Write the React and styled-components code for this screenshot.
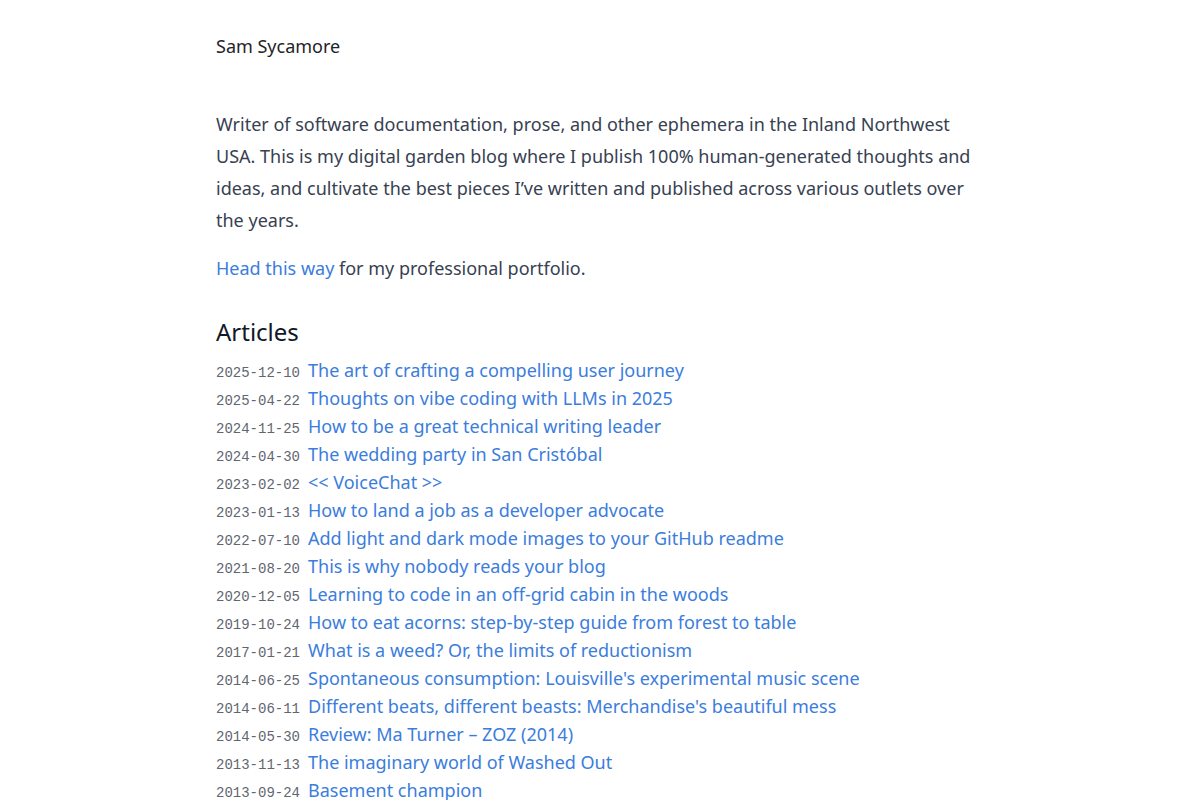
import React from "react";
import styled, { createGlobalStyle } from "styled-components";

const articles = [
  ["2025-12-10", "The art of crafting a compelling user journey"],
  ["2025-04-22", "Thoughts on vibe coding with LLMs in 2025"],
  ["2024-11-25", "How to be a great technical writing leader"],
  ["2024-04-30", "The wedding party in San Cristóbal"],
  ["2023-02-02", "<< VoiceChat >>"],
  ["2023-01-13", "How to land a job as a developer advocate"],
  ["2022-07-10", "Add light and dark mode images to your GitHub readme"],
  ["2021-08-20", "This is why nobody reads your blog"],
  ["2020-12-05", "Learning to code in an off-grid cabin in the woods"],
  ["2019-10-24", "How to eat acorns: step-by-step guide from forest to table"],
  ["2017-01-21", "What is a weed? Or, the limits of reductionism"],
  ["2014-06-25", "Spontaneous consumption: Louisville's experimental music scene"],
  ["2014-06-11", "Different beats, different beasts: Merchandise's beautiful mess"],
  ["2014-05-30", "Review: Ma Turner – ZOZ (2014)"],
  ["2013-11-13", "The imaginary world of Washed Out"],
  ["2013-09-24", "Basement champion"],
];

const App = () => {
  return (
    <>
      <GlobalStyle />
      <Page>
        <Header>
          <SiteName href="#">Sam Sycamore</SiteName>
        </Header>
        <Main>
          <Paragraph>
            Writer of software documentation, prose, and other ephemera in the
            Inland Northwest USA. This is my digital garden blog where I publish
            100% human-generated thoughts and ideas, and cultivate the best
            pieces I’ve written and published across various outlets over the
            years.
          </Paragraph>
          <Paragraph>
            <Link href="#">Head this way</Link> for my professional portfolio.
          </Paragraph>
          <SectionTitle>Articles</SectionTitle>
          <ArticleList>
            {articles.map(([date, title]) => (
              <ArticleRow key={date + title}>
                <DateStamp>{date}</DateStamp>
                <Link href="#">{title}</Link>
              </ArticleRow>
            ))}
          </ArticleList>
        </Main>
      </Page>
    </>
  );
};
export default App;

const GlobalStyle = createGlobalStyle`
  body {
    margin: 0;
    background: #ffffff;
    font-family: "Noto Sans", sans-serif;
    color: #374151;
  }
`;
const Page = styled.div`
  max-width: 768px;
  margin: 0 auto;
  padding-top: 32px;
`;
const Header = styled.header`
  height: 28px;
  display: flex;
  align-items: center;
`;
const SiteName = styled.a`
  font-size: 18px;
  color: #1f2328;
  text-decoration: none;
`;
const Main = styled.main`
  display: flex;
  flex-direction: column;
  padding-top: 48px;
`;
const Paragraph = styled.p`
  margin: 0 0 16px;
  font-size: 18px;
  line-height: 32px;
  color: #374151;
`;
const Link = styled.a`
  color: #3b7ddd;
  text-decoration: none;
`;
const SectionTitle = styled.h2`
  margin: 16px 0 8px;
  font-size: 24px;
  font-weight: 400;
  line-height: 32px;
  color: #111827;
`;
const ArticleList = styled.ul`
  list-style: none;
  margin: 0;
  padding: 0;
`;
const ArticleRow = styled.li`
  display: flex;
  align-items: baseline;
  gap: 8px;
  height: 28px;
  font-size: 18px;
  line-height: 28px;
`;
const DateStamp = styled.span`
  font-family: "Liberation Mono", monospace;
  font-size: 14px;
  color: #5f6670;
`;
